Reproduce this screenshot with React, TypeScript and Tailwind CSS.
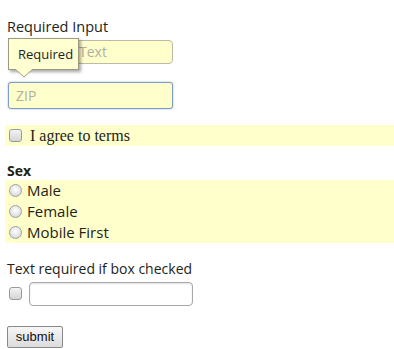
import React from "react";

const font = { fontFamily: '"Open Sans", "Liberation Sans", sans-serif' };

function Check() {
  return (
    <span className="inline-block w-[13px] h-[13px] rounded-[3px] border border-[#9a9a9a] bg-gradient-to-b from-[#f4f4f4] to-[#d4d4d4] shrink-0" />
  );
}

function Radio() {
  return (
    <span className="inline-block w-[13px] h-[13px] rounded-full border border-[#a0a0a0] bg-[radial-gradient(circle_at_50%_40%,#ffffff_0%,#e6e6e6_55%,#c8c8c8_100%)] shrink-0" />
  );
}

export default function App() {
  return (
    <div className="bg-white w-[394px] h-[349px] overflow-hidden text-[#1e2418] text-[14px] pl-[7px] pt-[17px]" style={font}>
      <div className="h-[20px] leading-[20px] text-[14.5px]">Required Input</div>
      <div className="relative mt-[3px]">
        <div className="ml-[1px] w-[165px] h-[24px] rounded-[4px] border border-[#bcbca4] bg-[#ffffcc] pl-[70px] leading-[22px] text-[#b0b0a0]">
          Text
        </div>
        <div className="absolute left-[1px] top-[-2px] w-[71px] h-[32px] bg-[#ffffd2] border border-[#9a9a80] shadow-[2px_2px_3px_rgba(0,0,0,0.35)] text-[13px] leading-[30px] pl-[9px] text-[#222]">
          Required
          <svg className="absolute left-[6px] top-[30px]" width="18" height="10" viewBox="0 0 18 10">
            <path d="M0 0 L9 8 L18 0 Z" fill="#ffffd2" />
            <path d="M0 0 L9 8 L18 0" fill="none" stroke="#9a9a80" strokeWidth="1" />
          </svg>
        </div>
      </div>
      <div className="mt-[18px] ml-[1px] w-[165px] h-[27px] rounded-[3px] border border-[#7f9cc4] shadow-[0_0_2px_rgba(90,130,190,0.6)] bg-[#ffffcc] pl-[7px] leading-[25px] text-[#b0b0a0]">
        ZIP
      </div>
      <div className="mt-[16px] -ml-[2px] h-[21px] bg-[#ffffcc] flex items-center pl-[4px]">
        <Check />
        <span className="ml-[8px] text-[16px] leading-[21px]" style={{ fontFamily: '"Liberation Serif", serif' }}>
          I agree to terms
        </span>
      </div>
      <div className="mt-[16px] h-[18px] leading-[18px] font-bold">Sex</div>
      <div className="-ml-[2px] bg-[#ffffcc] pl-[4px]">
        {["Male", "Female", "Mobile First"].map((l) => (
          <div key={l} className="h-[21px] flex items-center">
            <Radio />
            <span className="ml-[5px] leading-[21px] text-[15px]">{l}</span>
          </div>
        ))}
      </div>
      <div className="mt-[16px] h-[20px] leading-[20px]">Text required if box checked</div>
      <div className="mt-[3px] flex items-center">
        <span className="ml-[2px]"><Check /></span>
        <div className="ml-[7px] w-[164px] h-[24px] rounded-[4px] border border-[#a8a8a8] bg-white shadow-[inset_0_1px_2px_rgba(0,0,0,0.12)]" />
      </div>
      <button className="mt-[20px] h-[22px] w-[56px] border border-[#8a8a8a] rounded-[2px] bg-gradient-to-b from-[#f6f6f6] to-[#dcdcdc] text-[13px] leading-[20px] text-[#111] flex items-center justify-center" style={{ fontFamily: '"Liberation Sans", sans-serif' }}>
        submit
      </button>
    </div>
  );
}
